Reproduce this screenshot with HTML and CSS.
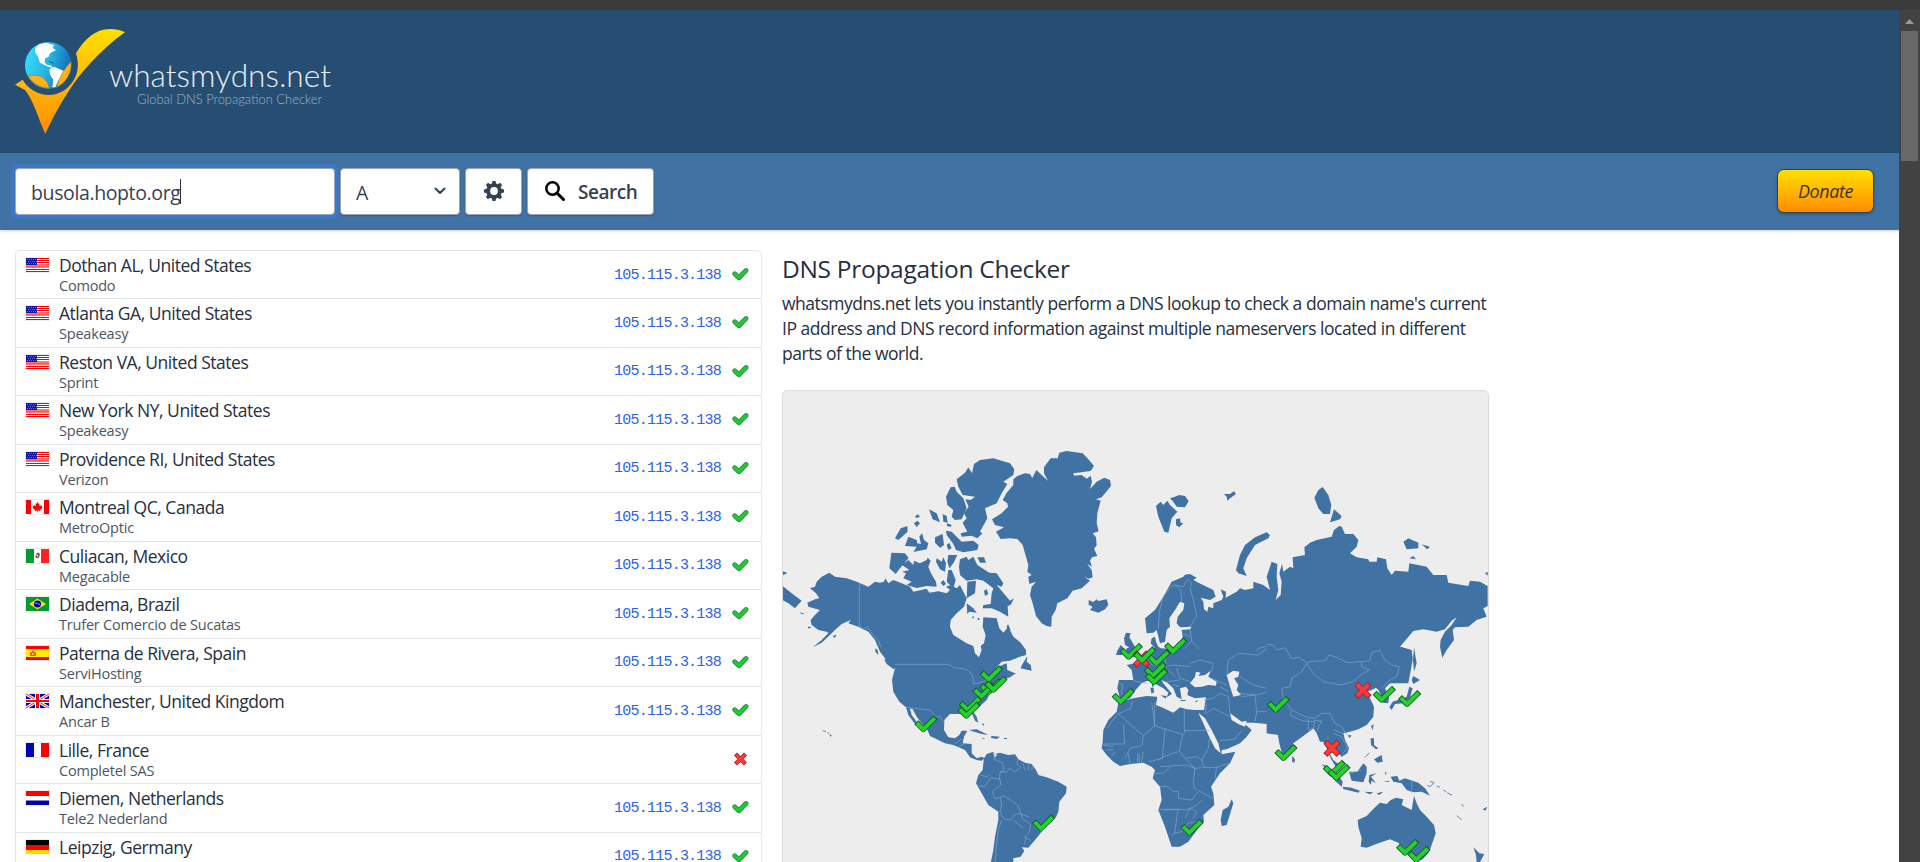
FILE: index.html
```html
<!DOCTYPE html>
<html lang="en">
<head>
<meta charset="utf-8">
<title>DNS Propagation Checker - whatsmydns.net</title>
<link rel="stylesheet" href="styles.css">
</head>
<body>
<svg class="defs" aria-hidden="true">
  <defs>
    <symbol id="us" viewBox="0 0 23 14"><path fill="#fff" d="M0 0h23v14H0z"/><path fill="#f00" d="M0 0h23v1H0zM0 2h23v1H0zM0 4h23v1H0zM0 11h23v1H0zM0 13h23v1H0z"/><path fill="#ff7373" d="M0 6h23v4H0z"/><path fill="#f55" d="M0 8h23v1H0z"/><path fill="#1414a8" d="M0 0h11v7H0z"/><path stroke="#8c8ce0" stroke-width=".7" stroke-dasharray="1 1" d="M1 1.500h9.500M2 3.500h9M1 5.500h9.500"/></symbol>
    <symbol id="ca" viewBox="0 0 23 14"><path fill="#fff" d="M0 0h23v14H0z"/><path fill="#f00" d="M0 0h5v14H0zM18 0h5v14h-5zM11.500 2l1 1.800 1-.4-.3 2.800 1.300-1.200.4.900 1.500-.2-.6 1.700.7.500-2.400 2 .2 1-2.500-.3v1.900h-.6v-1.900l-2.500.3.200-1-2.400-2 .7-.5-.6-1.700 1.500.2.400-.9 1.300 1.200-.3-2.800 1 .4z"/></symbol>
    <symbol id="mx" viewBox="0 0 23 14"><path fill="#fff" d="M0 0h23v14H0z"/><path fill="#093" d="M0 0h8v14H0z"/><path fill="#f22" d="M15 0h8v14h-8z"/><path fill="#765" d="M9 8l2-4 2-.5 1 2-1 3-2 1z"/><path fill="#ccb" d="M10.500 6h1.500v1.500h-1.500z"/></symbol>
    <symbol id="br" viewBox="0 0 23 14"><path fill="#093" d="M0 0h23v14H0z"/><path fill="#fd0" d="M11.500 1.500L20 7l-8.500 5.500L3 7z"/><circle cx="11.500" cy="7" r="3.600" fill="#00a"/><path stroke="#9cf" stroke-width=".8" fill="none" d="M8.200 6q3.500-.5 6.300 2"/></symbol>
    <symbol id="es" viewBox="0 0 23 14"><path fill="#f00" d="M0 0h23v14H0z"/><path fill="#fe0" d="M0 3h23v8H0z"/><path fill="#e62" d="M4 6h2V4.500h2V6h2v4H4z"/><path fill="#fc8" d="M6 7h1.500v2H6z"/></symbol>
    <symbol id="gb" viewBox="0 0 23 14"><path fill="#0000b4" d="M0 0h23v14H0z"/><path stroke="#fff" stroke-width="3" d="M0 0l23 14M23 0L0 14"/><path stroke="#f22" d="M0 0l23 14M23 0L0 14"/><path fill="#fff" d="M9 0h5v14H9zM0 5h23v4H0z"/><path fill="#f00" d="M10 0h3v14h-3zM0 6h23v2H0z"/></symbol>
    <symbol id="fr" viewBox="0 0 23 14"><path fill="#fff" d="M0 0h23v14H0z"/><path fill="#0000b4" d="M0 0h8v14H0z"/><path fill="#f00" d="M15 0h8v14h-8z"/></symbol>
    <symbol id="nl" viewBox="0 0 23 14"><path fill="#fff" d="M0 0h23v14H0z"/><path fill="#f00" d="M0 0h23v5H0z"/><path fill="#0000b4" d="M0 9.500h23V14H0z"/></symbol>
    <symbol id="de" viewBox="0 0 23 14"><path fill="#000" d="M0 0h23v5H0z"/><path fill="#f00" d="M0 5h23v5H0z"/><path fill="#fd0" d="M0 10h23v4H0z"/></symbol>
    <g id="tick" fill="none"><path stroke="#17572f" stroke-width="17" stroke-linejoin="round" d="M-21-21L0 0l37-36"/><path stroke="#25d12a" stroke-width="12" d="M-19-19L0 0l34.500-33.500"/></g>
    <g id="cross" fill="none"><path stroke="#8e2733" stroke-width="17" d="M-20-20l40 40M20-20l-40 40"/><path stroke="#ff3838" stroke-width="12.500" d="M-18-18l36 36M18-18l-36 36"/></g>
    <symbol id="ok" viewBox="-30 -45 74 58"><path fill="none" stroke-linecap="round" stroke-linejoin="round" stroke="#2e8060" stroke-width="21" d="M-18-17L0 0l31-31"/><path fill="none" stroke-linecap="round" stroke-linejoin="round" stroke="#22cc28" stroke-width="14" d="M-18-17L0 0l31-31"/></symbol>
    <symbol id="no" viewBox="-28 -28 56 56"><use href="#cross"/></symbol>
    <linearGradient id="gold" x1="0" y1="0" x2="0" y2="1"><stop offset="0" stop-color="#ffe000"/><stop offset=".5" stop-color="#ffb80a"/><stop offset="1" stop-color="#ff8c00"/></linearGradient>
    <linearGradient id="globe" x1="0" y1=".3" x2="1" y2=".6"><stop offset="0" stop-color="#35dcfa"/><stop offset=".5" stop-color="#27b4e4"/><stop offset="1" stop-color="#0d62ae"/></linearGradient>
  </defs>
</svg>

<div class="window-edge"></div>
<div class="frame">
<div class="page">
  <header class="header">
    <svg class="logo" viewBox="0 0 340 140" width="340" height="140">
      <g transform="translate(0 -10) scale(.33333)">
        <path fill="url(#gold)" d="M45 254L68 239C85 268 115 285 148 285C190 285 228 250 233 205C235 185 231 170 228 160C255 115 285 88 330 87C350 87 365 91 375 97C300 150 240 220 205 275C175 320 150 370 136 402C115 355 98 295 75 270Z"/>
        <circle cx="145" cy="196" r="70" fill="url(#globe)"/>
        <path fill="#fff" d="M105 145L118 133 138 128 162 135 158 144 168 150 150 160 145 172 136 174 134 186 140 194 152 196 160 204 148 202 132 194 120 188 113 168 106 158zM148 208L162 200 176 206 194 214 188 230 176 240 166 262 157 262 160 240 150 224z"/>
        <path fill="#176fae" d="M146 183l16 4-2 4-14-5z"/>
        <path fill="#ffb31a" stroke="#a57a25" stroke-width="2" d="M85 229C110 220 140 228 148 265C120 263 98 250 85 229zM213 185C216 215 202 245 170 262C178 235 192 205 213 185z"/>
      </g>
      <text class="logo-name" x="109" y="77" textLength="222" lengthAdjust="spacingAndGlyphs">whatsmydns.net</text>
      <text class="logo-tag" x="137" y="94" textLength="185" lengthAdjust="spacingAndGlyphs">Global DNS Propagation Checker</text>
    </svg>
  </header>

  <nav class="bar">
    <div class="field query"><span class="query-text">busola.hopto.org</span><i class="caret"></i></div>
    <div class="field type"><span>A</span><svg width="12" height="8" viewBox="0 0 12 8"><path d="M1.500 1.500L6 6l4.500-4.500" fill="none" stroke="#334155" stroke-width="2" stroke-linecap="round" stroke-linejoin="round"/></svg></div>
    <div class="field gear"><svg width="20" height="20" viewBox="-10 -10 20 20"><g fill="#374154"><circle r="7.800"/><g id="teeth"><path d="M-2.200-7l.7-3h3l.7 3zM-2.200 7l.7 3h3l.7-3zM-7-2.200l-3 .7v3l3 .7zM7-2.200l3 .7v3l-3 .7z"/></g><use href="#teeth" transform="rotate(45)"/></g><circle r="3.900" fill="#fff"/></svg></div>
    <div class="field search"><svg width="20" height="20" viewBox="0 0 20 20"><circle cx="7.500" cy="7.500" r="6.200" fill="none" stroke="#000" stroke-width="2.500"/><path d="M12 12l6.500 6.500" stroke="#000" stroke-width="3" stroke-linecap="round"/></svg><span>Search</span></div>
    <div class="donate"><span>Donate</span></div>
  </nav>

  <main class="content">
    <div class="results">
      <div class="row"><svg class="flag"><use href="#us"/></svg><div class="place"><div class="name">Dothan AL, United States</div><div class="isp">Comodo</div></div><div class="ip">105.115.3.138</div><svg class="mark"><use href="#ok"/></svg></div>
      <div class="row"><svg class="flag"><use href="#us"/></svg><div class="place"><div class="name">Atlanta GA, United States</div><div class="isp">Speakeasy</div></div><div class="ip">105.115.3.138</div><svg class="mark"><use href="#ok"/></svg></div>
      <div class="row"><svg class="flag"><use href="#us"/></svg><div class="place"><div class="name">Reston VA, United States</div><div class="isp">Sprint</div></div><div class="ip">105.115.3.138</div><svg class="mark"><use href="#ok"/></svg></div>
      <div class="row"><svg class="flag"><use href="#us"/></svg><div class="place"><div class="name">New York NY, United States</div><div class="isp">Speakeasy</div></div><div class="ip">105.115.3.138</div><svg class="mark"><use href="#ok"/></svg></div>
      <div class="row"><svg class="flag"><use href="#us"/></svg><div class="place"><div class="name">Providence RI, United States</div><div class="isp">Verizon</div></div><div class="ip">105.115.3.138</div><svg class="mark"><use href="#ok"/></svg></div>
      <div class="row"><svg class="flag"><use href="#ca"/></svg><div class="place"><div class="name">Montreal QC, Canada</div><div class="isp">MetroOptic</div></div><div class="ip">105.115.3.138</div><svg class="mark"><use href="#ok"/></svg></div>
      <div class="row"><svg class="flag"><use href="#mx"/></svg><div class="place"><div class="name">Culiacan, Mexico</div><div class="isp">Megacable</div></div><div class="ip">105.115.3.138</div><svg class="mark"><use href="#ok"/></svg></div>
      <div class="row"><svg class="flag"><use href="#br"/></svg><div class="place"><div class="name">Diadema, Brazil</div><div class="isp">Trufer Comercio de Sucatas</div></div><div class="ip">105.115.3.138</div><svg class="mark"><use href="#ok"/></svg></div>
      <div class="row"><svg class="flag"><use href="#es"/></svg><div class="place"><div class="name">Paterna de Rivera, Spain</div><div class="isp">ServiHosting</div></div><div class="ip">105.115.3.138</div><svg class="mark"><use href="#ok"/></svg></div>
      <div class="row"><svg class="flag"><use href="#gb"/></svg><div class="place"><div class="name">Manchester, United Kingdom</div><div class="isp">Ancar B</div></div><div class="ip">105.115.3.138</div><svg class="mark"><use href="#ok"/></svg></div>
      <div class="row"><svg class="flag"><use href="#fr"/></svg><div class="place"><div class="name">Lille, France</div><div class="isp">Completel SAS</div></div><div class="ip"></div><svg class="mark"><use href="#no"/></svg></div>
      <div class="row"><svg class="flag"><use href="#nl"/></svg><div class="place"><div class="name">Diemen, Netherlands</div><div class="isp">Tele2 Nederland</div></div><div class="ip">105.115.3.138</div><svg class="mark"><use href="#ok"/></svg></div>
      <div class="row"><svg class="flag"><use href="#de"/></svg><div class="place"><div class="name">Leipzig, Germany</div><div class="isp"></div></div><div class="ip">105.115.3.138</div><svg class="mark"><use href="#ok"/></svg></div>
    </div>

    <section class="info">
      <h1 class="title">DNS Propagation Checker</h1>
      <p class="lead">whatsmydns.net lets you instantly perform a DNS lookup to check a domain name's current<br>IP address and DNS record information against multiple nameservers located in different<br>parts of the world.</p>
      <div class="map">
        <svg width="705" height="471" viewBox="783 391 705 471">
          <g transform="translate(780 390) scale(.33333)">
            <!-- Greenland, Iceland and the Arctic islands -->
            <g class="land">
              <path d="M700 268L712 258 735 250 750 252 757 264 769 240 785 255 804 272 792 250 792 232 812 205 833 205 838 188 860 183 908 190 925 208 942 228 932 243 880 250 882 257 905 255 920 266 932 257 936 275 930 297 950 275 973 263 990 270 993 288 965 322 948 328 962 332 952 370 950 400 956 424 938 430 948 442 950 466 942 476 952 498 936 502 930 512 936 530 922 522 935 540 938 562 926 566 912 560 930 572 905 595 878 602 862 625 832 640 827 660 815 680 814 710 800 708 785 700 768 678 758 640 750 615 755 590 768 575 748 582 745 560 755 555 742 545 745 525 738 500 728 465 712 447 690 445 662 447 648 425 672 412 645 405 636 388 665 370 684 350 682 340 668 330 680 308 700 285z"/>
              <path d="M926 630L940 636 950 628 955 633 980 628 985 645 975 658 955 668 930 660 938 650 926 645z"/>
              <path d="M530 268L555 248 565 232 576 250 582 222 600 210 640 205 690 220 703 238 700 255 670 275 682 282 665 310 650 340 615 355 622 385 600 425 607 430 592 445 575 437 545 440 542 430 562 425 548 398 560 385 552 370 566 350 556 328 572 330 585 320 548 315 535 290z"/>
              <path d="M512 292L524 290 530 305 550 325 560 355 545 388 525 390 515 380 520 360 502 345 498 320zM498 422L515 425 545 455 580 452 596 465 592 480 550 487 528 480 520 462 500 435zM447 358L470 370 480 397 458 388zM488 372L500 378 503 398 490 395zM502 400L515 405 512 411 500 407zM402 400L412 392 420 400 410 411zM406 378L414 373 420 381 408 384zM382 408L383 425 355 450 345 445 362 415zM375 468L385 440 410 450 412 460 423 462 418 440 426 430 432 450 445 460 440 478 400 486 410 470zM465 442L488 432 492 465 480 473 465 458zM500 465L508 458 515 475 505 480zM334 488L375 490 386 504 360 535 347 552 328 535zM366 525L385 510 400 525 402 512 420 520 440 510 443 503 452 512 445 530 452 548 468 575 470 590 440 588 410 594 380 585 395 575 370 565 378 550 366 545 388 540zM470 505L485 515 490 502 498 520 495 545 480 538 468 515zM505 495L532 495 520 520 508 535 502 515zM505 540L515 540 527 570 520 595 500 575zM592 502L612 502 618 518 600 518z"/>
              <path d="M540 508L560 500 565 510 580 500 592 525 628 548 650 550 670 580 665 590 650 585 690 632 702 625 692 645 683 648 685 680 660 665 635 655 608 655 610 645 632 642 635 610 640 595 610 572 590 568 560 572 540 555 537 530z"/>
              <path d="M562 575L588 572 585 610 560 625zM612 602L620 598 625 612 615 618zM560 640L580 655 590 668 568 665 562 672zM482 578L490 570 498 582 490 588zM8 588L35 610 65 632 45 655 25 640 8 630zM8 543L22 549 8 556zM58 667l16 4-8 2zM575 682l6-4v8zM593 684h5v6h-5z"/>
            </g>

            <!-- The Americas -->
            <g transform="translate(0 690)">
              <g class="land">
                <path d="M90-95L105-100 110-115 125-130 148-142 165-130 200-125 230-115 265-100 285-115 300-112 312-115 316-125 325-110 340-120 365-110 390-100 400-85 440-94 448-82 475-86 500-80 510-90 498-100 512-105 530-95 540-105 550-85 560-65 552-40 530-20 512 0 510 20 520 45 560 70 580 78 585 100 597 112 605 90 602 78 612 70 617 45 608 20 610-8 650-5 658 25 670 38 685 20 700 50 722 68 738 90 738 105 715 112 690 122 665 125 650 142 680 130 682 150 705 160 710 158 690 172 672 178 650 195 640 210 632 215 620 240 598 260 580 275 590 290 595 308 585 302 575 278 560 285 540 282 510 282 493 300 492 330 505 352 525 355 538 345 545 332 562 332 552 350 548 370 575 372 575 400 590 415 605 410 614 415 605 422 590 420 570 412 555 390 520 375 495 370 450 348 440 325 425 310 410 290 398 268 390 265 395 285 410 305 405 312 385 285 378 262 358 245 340 215 336 180 345 145 320 130 315 115 300 95 285 60 265 35 235 20 205 10 212 0 185 12 165 30 150 45 125 68 98 82 125 60 145 40 140 35 115 30 95 15 92 0 105-15 120-30 85-40 82-52 105-62 118-65 108-80z"/>
                <path d="M726 135L742 108 740 125 752 135 755 152 735 148 722 145zM568 330L590 328 625 345 605 342 575 333zM635 348L660 350 650 357 632 353zM672 354h9v3h-9zM605 355h10l-5 3zM312 118L330 125 347 145 340 147 320 132zM285 85l8 5 2 15-8-8zM158 48l12-4-6 10zM84 20h8v5h-8zM148 342l7 4-3 5zM605 310l8 2-2 6z"/>
                <path d="M612 415L620 402 640 395 645 402 660 398 685 405 705 403 715 418 735 428 755 432 768 450 775 465 800 472 835 485 860 500 858 520 838 545 835 575 828 592 800 605 785 635 765 660 745 683 725 682 733 692 722 710 700 715 700 730 632 730 640 690 645 650 655 600 655 575 625 555 605 520 588 490 595 465 608 450 610 430zM682 28l-2-8 4-8 8 18z"/>
              </g>
              <path class="sea" d="M640 398l7-5 3 14-7 6z"/>
              <path class="edge" d="M238-112V18L250 28 262 20 275 40 296 62 302 82M345 133H505L520 142 560 148 578 165 580 192 600 188 640 172 662 150M378 262L430 268 450 270 465 290 480 290 492 308M525 372l20-15M535 380l20-10M645 400l-3 18 25 10 5 25-12 5-2 20-25-5-20 28-18-5M660 475l2 20-25 20 8 22 15-5 10-5 25 15 20 15 8 25 25 10M660 530l5 25-5 20M660 575l12 22 20 3 10-15 20-5 5 15 25 18-5 25-8 8-5 28M665 600l-10 30-5 40-5 60M700 600l30 25M733 650l20 12M715 418l-5 10 12 15-18 12-15-10-10 12-18-3M728 430l8 22M745 432v20M758 436l-3 16M600 465l20 5 10-5"/>
              <path class="isle" d="M128 332l10 3M142 338l6 2"/>
            </g>

            <!-- Northern Eurasia -->
            <g transform="translate(1050 120)">
              <g class="land">
                <path d="M78 228L92 215 100 225 112 212 120 225 142 245 125 265 115 308 103 305 97 290 85 260zM120 205L135 200 148 195 165 198 176 213 165 232 140 230 130 215zM138 268L150 265 152 278 160 280 148 292 138 285zM282 192L300 192 312 184 318 192 300 205 292 212 290 200zM318 420L330 375 345 345 375 322 410 307 420 315 415 325 375 345 350 385 340 415 350 438 325 430zM553 203L565 180 578 171 595 195 604 225 600 252 580 252 565 235zM600 277L612 238 635 258 630 268zM820 335L835 325 865 338 865 355 830 358zM875 343L900 350 892 358zM838 385L850 378 858 388zM1065 430l8-5v12z"/>
                <path d="M45 565L75 540 100 500 125 455 160 440 165 434 180 432 200 443 190 450 205 458 250 480 257 500 240 510 212 503 220 515 222 538 232 545 235 530 250 535 250 520 275 510 280 500 272 478 288 485 287 503 320 485 330 475 345 480 370 475 370 455 400 465 420 480 410 440 425 395 442 402 440 440 445 480 437 510 452 495 455 455 448 430 456 402 460 425 480 410 490 415 488 382 525 375 523 352 540 338 560 330 605 320 612 300 628 288 635 290 645 312 670 312 685 330 680 350 660 370 680 382 715 388 718 395 740 395 742 382 768 388 772 415 785 435 795 422 835 425 838 400 890 410 910 435 950 435 955 458 1015 468 1020 452 1050 455 1073 468 1073 528 1060 535 1070 560 1040 570 1015 590 975 592 968 600 972 630 950 660 937 683 930 650 932 630 945 605 965 585 980 562 965 572 945 598 920 605 880 598 850 603 810 650 845 660 848 690 835 760 60 760 50 690 60 668 75 655 62 640 65 625 75 620 78 635 85 650 100 660 150 650 158 620 155 600 180 598 185 590 150 592 140 580 143 560 160 540 163 520 150 515 135 540 118 565 120 590 110 600 105 635 90 640 80 600 70 608 50 610z"/>
              </g>
              <path class="edge" d="M85 598L88 545 100 500 125 468 135 465 153 480 155 515M135 465l25 5 12-22 13 10-5 15 12 45 8 40-20 32M180 598l5 35-30 30-3 20M160 610l20 10M185 633l20 20 5 25-45 8M155 663l35 20M165 690l50 5 35 10v15M290 720L288 700 315 682 370 690 385 655 430 643 460 655 470 670 500 690 530 705 540 692 590 695 600 680 640 692 680 700 720 695M690 700L720 670 750 665 760 690 780 710 810 712M105 690l50 15"/>
            </g>

            <!-- Europe, Africa, Middle East and India -->
            <g transform="translate(900 690)">
              <g class="land">
                <path d="M225 85L215 90 195 108 165 130 140 135 155 150 160 180 117 180 112 205 120 235 115 250 110 275 85 300 70 330 68 365 65 385 80 405 100 425 120 438 150 432 190 428 215 440 225 450 218 475 240 500 245 540 235 570 255 620 275 680 300 680 325 665 355 625 372 605 370 585 403 555 400 520 393 500 420 460 450 430 466 395 425 403 425 390 440 388 480 370 500 350 515 330 490 308 520 308 560 312 580 330 592 335 598 370 607 405 620 412 632 395 640 370 660 355 680 340 700 325 720 340 720 95z"/>
                <path d="M135 115L145 108 148 100 138 95 140 85 148 82 135 75 132 55 138 38 152 40 148 52 165 80 178 100 165 110zM108 105L112 92 122 75 132 85 127 105zM455 538L460 550 440 615 425 618 422 600 428 570 445 560zM637 408L645 418 643 428 636 425z"/>
              </g>
              <path class="sea" d="M128 243L150 235 165 212 185 190 200 183 215 183 232 195 250 205 265 218 260 232 276 222 250 190 245 180 262 188 280 205 290 230 305 238 300 205 318 200 325 210 322 225 345 235 378 232 372 270 345 270 320 268 300 262 280 278 245 262 228 255 232 230 200 228 160 235zM330 190L345 170 348 155 362 158 355 168 375 165 392 152 385 170 410 185 408 197 385 195 365 200 345 202zM440 165L460 152 478 155 475 170 462 175 475 195 470 210 483 225 460 230 450 200zM355 278L375 295 395 330 415 370 422 400 405 385 385 345 370 310zM450 280L465 290 485 305 500 302 495 320 475 312 455 300z"/>
              <path class="land" d="M211 203h10l1 15-8 2zM216 190h5v10h-5zM242 226l18 2-3 8zM302 240h15v3h-15zM345 244l10-3-5 6z"/>
              <path class="edge" d="M118 190l10 3-4 32M160 182l40 8M157 245l-5 20-40 18-30 40M115 282l75 65 35-30-10-70M130 315l4 57H70M190 347l-5 30-35 8-15 30M225 245l-2 72 85 27 5-5V270M313 332h75M255 325l-8 90-40 10M308 344l-10 50-45 15-15 10M300 395l15 20 35-5 15 10 20-35 3-30M365 420l5 22 40 0 40-12M410 440l-5 35M315 415l30 30 20-2M345 445l-5 40 3 20 55 30M240 440l80-5 25 10M220 460h30l20-20M240 500h25l15 15 15 0v20l40 5 20-25M250 570l50-2 20 2 30-15 15-15M237 568h60l-5 12-8 60-10 5M284 640l20-5 20-25 20-5M340 595l10-20-20-10-15 30M150 435l-5-35M172 430l2-30M178 428V400M185 425l5-30M80 390h20M95 410l10-15M70 375l30 5M372 240l28-5 20-15 25 10 5 50M380 280l20-15 50 25M420 362l45-5 20-25M380 250l-5 30M395 175l45 20M420 200l25 15M485 230l40-5 5 50-5 30M530 275h50l20-40M440 165l5-45 30-20 60 5 40-30 30 10 25 25 25 10 10 30M480 170l40 25 40 10 15-20 50 5 20 10M480 220l50 5 50-15M570 205l10 25 40 5 10 45 25 10M600 240l-25 60M200 110l15 25 35 5M250 140l30-5 50 5M265 150l20 20M290 145l10 30 30 10M260 185l40-5M280 195l20 5M330 130l30-10 40 10-5 25M225 165l30 0M215 95l5 35M255 115l5 30"/>
            </g>

            <!-- East Asia and Oceania -->
            <g transform="translate(1470 690)">
              <g class="land">
                <path d="M-10 70L390 80 420 90 428 110 418 140 400 170 378 185 365 185 345 205 357 228 355 250 340 248 335 230 325 210 318 203 300 212 285 215 300 235 312 260 310 290 290 315 265 328 240 335 220 340 225 360 237 385 232 400 215 410 205 400 185 385 176 380 178 400 190 420 205 432 212 452 200 445 182 415 170 385 160 365 150 365 140 340 130 325 110 340 90 355 -10 340z"/>
                <path d="M155 432L175 440 200 460 218 485 215 500 195 482 175 455zM218 500L245 503 270 512 265 518 220 507zM282 515L310 517 300 523zM320 520l20-5-12 10zM237 455L262 455 280 430 290 440 290 460 280 487 245 482zM298 465L320 460 303 470 318 490 305 482 302 495 296 485zM302 355L312 355 312 375 325 385 318 388 303 375zM312 418L335 405 338 425 322 428zM362 470L382 468 388 482 405 475 445 488 465 505 480 527 455 515 430 517 410 510 395 490 370 485zM358 262L368 245 390 238 410 230 418 200 428 205 420 232 400 250 375 252 365 270zM425 180L430 168 450 180 430 192zM432 82L440 130 432 155 429 120zM303 318l8-5-3 18zM233 346h12l-6 8zM345 455l5 3-3 8zM340 483h20l-5 3zM638 568l14-8-6 12z"/>
                <path d="M263 600L290 588 312 565 330 548 350 552 362 540 378 533 400 538 395 555 425 570 432 528 440 550 450 570 470 590 492 615 497 640 485 675 475 700 455 720 430 722 415 700 405 685 395 680 385 668 360 658 325 670 290 683 272 680 275 655 265 620zM610 682L628 700 643 702 630 726 620 726 618 705z"/>
              </g>
              <path class="edge" d="M-10 72L10 75 20 90 45 83 65 115 90 112 110 130 130 160 160 185 210 195 250 185 272 165 298 150 275 140 275 125 230 128 200 112 178 105 165 122 120 125 110 130M275 125L300 122 305 97 330 92 345 120 365 135 388 140 380 170 360 180 335 205M110 130l-15 25-30 20-5 25-25 5 5 30 25 35 40 20 30 5 20-15 25 0 15 30 20 10 15 25M65 270l-5 15 40 18 35 2M115 295l0 35 15-5 5-25 20 5M155 300l-15 35M190 340l25 10 18 35-15 15M175 350l-5 25M190 330l30 10M425 480v37M240 460l35-10"/>
              <path class="isle" d="M480 485l12 2-10 12-10-2M500 498l10 4M520 510l8 5M532 518l14 8M575 552l5 8M560 587l15 12M285 412l14-14"/>
            </g>

            <!-- Server markers -->
            <g>
              <use href="#tick" x="430" y="1018"/><use href="#tick" x="626" y="868"/><use href="#tick" x="625" y="907"/><use href="#tick" x="604" y="919"/><use href="#tick" x="640" y="899"/><use href="#tick" x="563" y="959"/><use href="#tick" x="559" y="977"/><use href="#tick" x="783" y="1315"/>
              <use href="#tick" x="1022" y="935"/><use href="#tick" x="1046" y="800"/><use href="#cross" x="1084" y="807"/><use href="#tick" x="1086" y="811"/><use href="#tick" x="1129" y="820"/><use href="#tick" x="1118" y="857"/><use href="#tick" x="1122" y="876"/><use href="#tick" x="1179" y="784"/><use href="#tick" x="1228" y="1328"/><use href="#tick" x="1487" y="959"/><use href="#tick" x="1510" y="1104"/>
              <use href="#cross" x="1749" y="901"/><use href="#cross" x="1656" y="1075"/><use href="#tick" x="1805" y="929"/><use href="#tick" x="1881" y="942"/><use href="#tick" x="1655" y="1151"/><use href="#tick" x="1669" y="1163"/><use href="#tick" x="1875" y="1388"/><use href="#tick" x="1909" y="1409"/>
            </g>
          </g>
        </svg>
      </div>
    </section>
  </main>
</div>
<div class="scrollbar">
  <svg width="9" height="5" viewBox="0 0 9 5"><path fill="#999" d="M0 5L4.500 0 9 5z"/></svg>
  <div class="thumb"></div>
</div>
</div>
</body>
</html>
```

FILE: styles.css
```css
* { box-sizing: border-box; }
body {
  margin: 0;
  height: 862px;
  overflow: hidden;
  background: #fff;
  color: #252f3f;
  font-family: "Open Sans", "Noto Sans", sans-serif;
}
.defs { display: block; width: 0; height: 0; }
.window-edge { height: 10px; background: #3b3b3b; }
.frame { display: flex; height: 852px; }
.page { flex: 1; overflow: hidden; }

.header { height: 143px; background: #264d72; }
.logo { display: block; }
.logo-name { font: 300 31px Lato, sans-serif; fill: #e9eef3; }
.logo-tag { font: 300 13.5px Lato, sans-serif; fill: #a0b3c6; }

.bar {
  display: flex;
  align-items: center;
  gap: 5px;
  height: 77px;
  padding: 0 25px 1px 15px;
  background: #4072a4;
  box-shadow: 0 1px 3px rgba(0, 0, 0, .2);
}
.field {
  display: flex;
  align-items: center;
  height: 47px;
  border: 1px solid #a0a5b1;
  border-radius: 4px;
  background: #fff;
  color: #374151;
  font-size: 19.5px;
  box-shadow: 0 1px 2px rgba(0, 0, 0, .2);
}
.field span { padding-top: 2px; }
.query { width: 320px; padding-left: 15px; box-shadow: 0 0 0 4px #3c78c8; }
.query-text { letter-spacing: -.38px; }
.caret { width: 1px; height: 25px; background: #252f3f; }
.type { width: 120px; padding: 0 13px 0 15px; justify-content: space-between; }
.gear { width: 57px; justify-content: center; }
.search { width: 127px; padding-left: 17px; gap: 13px; font-weight: 600; font-size: 19px; letter-spacing: -.45px; }
.donate {
  display: flex;
  align-items: center;
  justify-content: center;
  width: 97px;
  height: 44px;
  margin-left: auto;
  border: 1px solid #33434f;
  border-radius: 7px;
  background: linear-gradient(#ffe000, #ff8c00);
  box-shadow: 0 1px 3px rgba(0, 0, 0, .3);
  color: #3b3516;
  font-size: 18px;
  font-style: italic;
  letter-spacing: -.4px;
}

.content { display: flex; align-items: flex-start; gap: 20px; padding: 20px 15px 0; }
.results { width: 747px; border: 1px solid #e4e5e7; border-radius: 5px 5px 0 0; }
.row { display: flex; height: 48.5px; padding: 0 12px 0 10px; border-bottom: 1px solid #e4e5e7; }
.row:first-child { height: 48px; }
.flag { width: 23px; height: 14px; margin-top: 7px; box-shadow: 0 0 0 1px #eee; }
.place { flex: 1; padding: 3px 0 0 10px; }
.name { font-size: 17.5px; line-height: 22px; letter-spacing: -.48px; white-space: nowrap; }
.isp { color: #4b5563; font-size: 14.5px; line-height: 19px; letter-spacing: -.2px; }
.ip {
  padding-top: 13.5px;
  color: #2b62ea;
  font: 15px/22px "Liberation Mono", monospace;
  letter-spacing: -.78px;
}
.mark { width: 17px; height: 14px; margin: 16px 0 0 11px; }

.info { width: 707px; }
.title { margin: 2px 0 0; font-size: 24.5px; font-weight: 400; line-height: 34px; letter-spacing: -.3px; white-space: nowrap; }
.lead { margin: 5px 0 0; font-size: 17.5px; line-height: 25px; letter-spacing: -.47px; white-space: nowrap; }
.map {
  height: 520px;
  margin-top: 24px;
  border: 1px solid #dcdcdc;
  border-radius: 5px;
  background: #ededed;
  overflow: hidden;
}
.map svg { display: block; }
.land { fill: #4072a4; }
.sea { fill: #ededed; }
.edge { fill: none; stroke: #83a6c8; stroke-width: 2; stroke-linejoin: round; }
.isle { fill: none; stroke: #5f88b0; stroke-width: 3; }

.scrollbar {
  display: flex;
  flex-direction: column;
  align-items: center;
  width: 21px;
  padding-top: 9px;
  background: #424242;
}
.thumb { width: 17px; height: 130px; margin-top: 7px; background: #686868; }
```
